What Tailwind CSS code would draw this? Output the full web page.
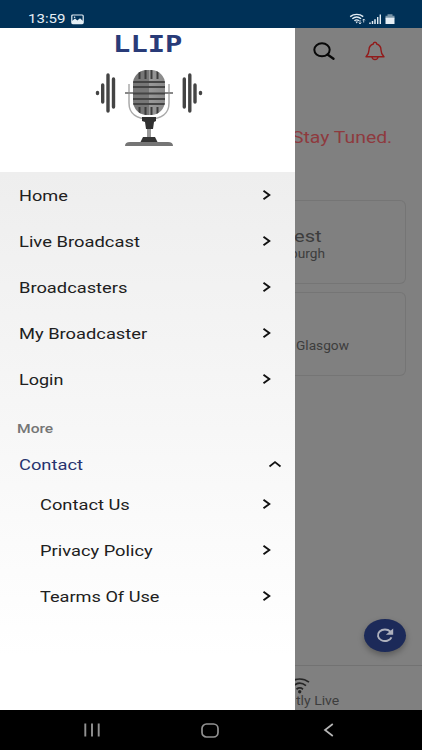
<!DOCTYPE html>
<html lang="en">
<head>
<meta charset="utf-8">
<title>LLIP</title>
<script src="https://cdn.jsdelivr.net/npm/@tailwindcss/browser@4"></script>
</head>
<body class="w-[422px] h-[750px] overflow-hidden flex flex-col bg-black font-['Roboto',sans-serif]">
<svg class="hidden"><defs>
<symbol id="chev" viewBox="0 0 10 12"><path d="M1.5 1.8 7.3 6 1.5 10.2" fill="none" stroke="#111" stroke-width="1.9"/></symbol>
</defs></svg>

<header class="h-7 shrink-0 bg-[#003157] flex items-end pl-7 pr-[26px] pb-[3px] text-[#e4eef5]">
  <span class="w-[43px] h-[14px] text-[13px] leading-[15px]"><span class="inline-block origin-left scale-x-[1.16]">13:59</span></span>
  <svg class="w-[13px] h-[11px]" viewBox="0 0 13 11"><rect x=".8" y="1" width="11.4" height="8.6" rx="1" fill="none" stroke="currentColor" stroke-width="1.2"/><path d="M1 9V7l3-2.600 2.300 2 2.700-2.200L12 7v2z" fill="currentColor"/><circle cx="3.600" cy="3.200" r=".8" fill="currentColor"/></svg>
  <span class="grow"></span>
  <svg class="w-[48px] h-[12px]" viewBox="0 0 48 12" fill="none" stroke="currentColor">
    <path d="M2.200 3.600C6 .6 11.500 .6 15.200 3.600M4.300 5.700c2.700-2.200 6.100-2.200 8.800 0M6.400 7.800c1.400-1.100 3.200-1.100 4.600 0" stroke-width="1.400"/>
    <path d="M7.400 8.600h2.600l-1.300 2z" fill="currentColor" stroke="none"/>
    <path d="M12 7v4M10.700 9.500l1.300 1.500 1.300-1.500M15.700 9.500V6M14.500 7.300 15.700 6l1.200 1.300" stroke-width=".8"/>
    <path d="M22 11V9.500M24.500 11V8M27 11V6.300" stroke-width="1.500"/><path d="M29.700 11V4M32.300 11V1.500" stroke-width="1.400"/>
    <path d="M39.500 1.200h5v1.500h2v2.800h-9V2.700h2z" fill="#7894a8" stroke="none"/><path d="M37.500 4.700h9v6.300h-9z" fill="currentColor" stroke="none"/>
  </svg>
</header>

<div class="h-[682px] shrink-0 flex">
  <aside class="w-[295px] shrink-0 flex flex-col bg-white">
    <div class="h-[144px] shrink-0 flex flex-col items-center pt-1">
      <h1 class="h-[26px] leading-[24px] text-[23px] font-bold text-[#293b78] font-['DejaVu_Sans_Mono',monospace] scale-x-[1.25]">LLIP</h1>
      <svg class="w-[112px] h-[80px] mt-[9px] ml-[3px]" viewBox="0 0 112 80">
        <defs><linearGradient id="mic"><stop offset="0" stop-color="#777"/><stop offset=".49" stop-color="#777"/><stop offset=".51" stop-color="#999"/><stop offset="1" stop-color="#888"/></linearGradient>
        <clipPath id="head"><rect x="40" y="3" width="32" height="45" rx="14" ry="14"/></clipPath></defs>
        <path d="M36 17v19c0 11 8 16 20 16s20-5 20-16V17" fill="none" stroke="#aaa" stroke-width="1.500"/>
        <path d="M32 26h10m28 0h10" stroke="#888" stroke-width="2"/>
        <g clip-path="url(#head)"><path d="M40 3h32v45H40z" fill="url(#mic)"/>
        <path d="M46.500 3v9m6-9v9m6-9v9m6-9v9M46.500 40v8m6-8v8m6-8v8m6-8v8" stroke="#3c3c3c" stroke-width="2"/>
        <path d="M40 15h32M40 20h32M40 26.500h32M40 32h32M40 37h32" stroke="#444" stroke-width="1.800"/></g>
        <path d="M49 50h14v4l-2 1-1 7h-7l-1-7-3-1z" fill="#303030"/>
        <path d="M54 62h4v9h-4z" fill="#999"/>
        <path d="M50 70h12l3 6H47z" fill="#333"/><path d="M37 75h38q5 0 5 4H32q0-4 5-4z" fill="#757575"/>
        <g stroke="#444" stroke-width="3.400" stroke-linecap="round"><path d="M4.500 25.500v1M9.700 18v17M15 8v36M20.500 12v28"/><path d="M107.500 25.500v1M102 18v17M96.800 8v36M91.300 12v28"/></g>
      </svg>
    </div>
    <nav class="grow flex flex-col bg-linear-to-b from-[#eeeeee] from-0% to-white to-90% text-[15px] text-[#202020]">
      <a class="h-[46px] flex items-center justify-between pl-[19px] pr-[23px] pt-[2px]"><span class="origin-left scale-x-[1.21] pt-px">Home</span><svg class="w-[10px] h-[12px] mb-[2px]"><use href="#chev"/></svg></a>
      <a class="h-[46px] flex items-center justify-between pl-[19px] pr-[23px] pt-[2px]"><span class="origin-left scale-x-[1.225] pt-px">Live Broadcast</span><svg class="w-[10px] h-[12px] mb-[2px]"><use href="#chev"/></svg></a>
      <a class="h-[46px] flex items-center justify-between pl-[19px] pr-[23px] pt-[2px]"><span class="origin-left scale-x-[1.22] pt-px">Broadcasters</span><svg class="w-[10px] h-[12px] mb-[2px]"><use href="#chev"/></svg></a>
      <a class="h-[46px] flex items-center justify-between pl-[19px] pr-[23px] pt-[2px]"><span class="origin-left scale-x-[1.22] pt-px">My Broadcaster</span><svg class="w-[10px] h-[12px] mb-[2px]"><use href="#chev"/></svg></a>
      <a class="h-[46px] flex items-center justify-between pl-[19px] pr-[23px] pt-[2px]"><span class="origin-left scale-x-[1.2] pt-px">Login</span><svg class="w-[10px] h-[12px] mb-[2px]"><use href="#chev"/></svg></a>
      <div class="h-[40px] flex items-end pl-[17px] pb-[4px] text-[13px] font-medium text-[#757575]"><span class="origin-left scale-x-[1.2]">More</span></div>
      <a class="h-[39px] flex items-center justify-between pl-[19px] pr-[13px] pt-[6px] text-[#26336f]"><span class="origin-left scale-x-[1.22] pt-px">Contact</span><svg class="w-[14px] h-[8px] mb-px" viewBox="0 0 14 8"><path d="M1.500 6.500 7 2l5.500 4.500" fill="none" stroke="#111" stroke-width="1.700"/></svg></a>
      <a class="h-[46px] flex items-center justify-between pl-[39.500px] pr-[23px]"><span class="origin-left scale-x-[1.22] pt-[2px]">Contact Us</span><svg class="w-[10px] h-[12px]"><use href="#chev"/></svg></a>
      <a class="h-[46px] flex items-center justify-between pl-[39.500px] pr-[23px]"><span class="origin-left scale-x-[1.22] pt-[2px]">Privacy Policy</span><svg class="w-[10px] h-[12px]"><use href="#chev"/></svg></a>
      <a class="h-[46px] flex items-center justify-between pl-[39.500px] pr-[23px]"><span class="origin-left scale-x-[1.21] pt-[2px]">Tearms Of Use</span><svg class="w-[10px] h-[12px]"><use href="#chev"/></svg></a>
    </nav>
  </aside>

  <main class="w-[127px] shrink-0 overflow-hidden flex flex-col bg-[#808080] text-[#3d3d3d]">
    <div class="h-[46px] shrink-0 flex items-center pl-[18px] gap-[30px]">
      <svg class="w-[22px] h-[18px]" viewBox="0 0 22 18" fill="none" stroke="#080808"><ellipse cx="9" cy="7.800" rx="7.700" ry="6.500" stroke-width="2"/><path d="m14.500 12.500 6 4.300" stroke-width="2.300" stroke-linecap="round"/></svg>
      <svg class="w-[20px] h-[20px]" viewBox="0 0 20 20" fill="none" stroke="#921b1b" stroke-width="1.400" stroke-linejoin="round"><path d="M8.300 3C8.300 .6 11.700 .6 11.700 3 15 4 16 6.300 16 9c0 3.500 1 4.500 3 6.800H1C3 13.500 4 12.500 4 9c0-2.700 1-5 4.300-6z"/><path d="M7 16c.3 3.300 5.700 3.300 6 0"/></svg>
    </div>
    <div class="h-[126px] shrink-0 pt-[51px] text-[17px] leading-[24px] text-[#8e3a3e] whitespace-nowrap"><p class="w-fit origin-left scale-x-[1.14] -ml-[3px]">Stay Tuned.</p></div>
    <section class="h-[84px] shrink-0 mr-4 border border-l-0 border-[#757575] rounded-r-[6px] pt-[24px]">
      <h2 class="-ml-px w-fit text-[17px] leading-[22px] origin-left scale-x-[1.18]">est</h2>
      <p class="-ml-[5px] w-fit text-[12px] leading-[14px] origin-left scale-x-[1.14]">burgh</p>
    </section>
    <section class="h-[84px] shrink-0 mt-2 mr-4 border border-l-0 border-[#757575] rounded-r-[6px] pt-[46px]">
      <p class="ml-[.5px] w-fit text-[12px] leading-[14px] origin-left scale-x-[1.14]">Glasgow</p>
    </section>
    <div class="grow flex items-end justify-end pr-4 pb-[13px]">
      <button class="w-[42px] h-[33px] rounded-[50%] bg-[#1c2a59] shadow-[0_3px_6px_rgba(0,0,0,0.3)] flex items-center justify-center"><svg class="w-[18px] h-[15px]" viewBox="0 0 18 15"><path d="M14.300 3.500A7 5.800 0 1 0 15.500 9.300" fill="none" stroke="#aeb1bd" stroke-width="1.900"/><path d="M17.200 .5v6.300H9.800z" fill="#aeb1bd"/></svg></button>
    </div>
    <footer class="h-[45px] shrink-0 border-t border-[#727272] pt-[12px]">
      <svg class="w-[15px] h-[16px]" viewBox="0 0 15 16" fill="none" stroke="#252525" stroke-width="1.700"><path d="M-4.500 4.200c5.500-4.300 13-4.300 18.500 0M-1.500 7.700c3.800-3 8.700-3 12.500 0M1.500 11.200c2-1.500 4.500-1.500 6.500 0"/><circle cx="4.700" cy="13.700" r="1.700" fill="#252525" stroke="none"/></svg>
      <p class="w-fit text-[12px] leading-[14px] origin-left scale-x-[1.17] ml-px">tly Live</p>
    </footer>
  </main>
</div>

<footer class="h-[40px] shrink-0 bg-black flex items-center pl-[83px]">
  <svg class="w-[18px] h-[14px]" viewBox="0 0 18 14"><path d="M2.300 .5v13M9 .5v13M15.700 .5v13" stroke="#929292" stroke-width="1.900"/></svg>
  <svg class="w-[18px] h-[15px] ml-[100px]" viewBox="0 0 18 15"><rect x="1" y="1" width="16" height="13" rx="4.500" fill="none" stroke="#929292" stroke-width="1.700"/></svg>
  <svg class="w-[11px] h-[14px] ml-[104px]" viewBox="0 0 11 14"><path d="M9.800 1 2 7l7.800 6" fill="none" stroke="#b5b5b5" stroke-width="1.700"/></svg>
</footer>
</body>
</html>
